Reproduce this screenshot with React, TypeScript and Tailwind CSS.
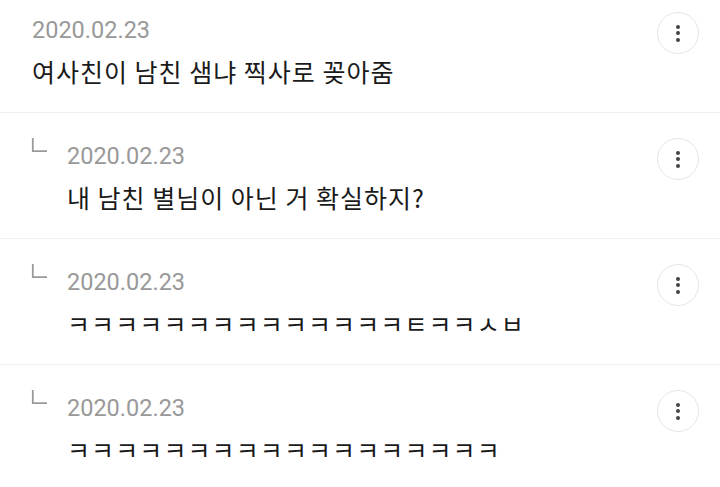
import React from "react";

const Kebab = () => (
  <div className="w-[42px] h-[42px] rounded-full border border-[#e6e6e6] flex flex-col items-center justify-center gap-[2.5px]">
    <span className="block w-[4px] h-[4px] rounded-full bg-[#444444]" />
    <span className="block w-[4px] h-[4px] rounded-full bg-[#444444]" />
    <span className="block w-[4px] h-[4px] rounded-full bg-[#444444]" />
  </div>
);

const ReplyIcon = () => (
  <svg width="18" height="16" viewBox="0 0 18 16" className="block">
    <path d="M1.8 0 V13.2 H16" fill="none" stroke="#9a9a9a" strokeWidth="1.8" />
  </svg>
);

type Item = { text: string; reply: boolean; tight?: boolean };

const items: Item[] = [
  { text: "여사친이 남친 샘냐 찍사로 꽂아줌", reply: false },
  { text: "내 남친 별님이 아닌 거 확실하지?", reply: true },
  { text: "ㅋㅋㅋㅋㅋㅋㅋㅋㅋㅋㅋㅋㅋㅋㅌㅋㅋㅅㅂ", reply: true, tight: true },
  { text: "ㅋㅋㅋㅋㅋㅋㅋㅋㅋㅋㅋㅋㅋㅋㅋㅋㅋㅋ", reply: true, tight: true },
];

export default function App() {
  return (
    <div className="w-[720px] h-[487px] overflow-hidden bg-white">
      <div className="-mt-[13px]">
        {items.map((it, i) => (
          <div key={i} className="flex h-[126px] border-b border-[#efefef]">
            <div className={`flex-1 flex pt-[27px] ${it.reply ? "pl-[31px]" : "pl-[32px]"}`}>
              {it.reply && (
                <div className="w-[36px] -mt-[2px]">
                  <ReplyIcon />
                </div>
              )}
              <div className="flex flex-col">
                <div
                  className="text-[23.5px] leading-[32px] text-[#999999]"
                  style={{ fontFamily: "Roboto, 'Noto Sans', sans-serif" }}
                >
                  2020.02.23
                </div>
                <div
                  className={`mt-[8px] text-[25px] leading-[34px] font-normal text-[#1a1a1a] ${it.tight ? "tracking-[1.1px]" : "tracking-[1px]"}`}
                  style={{ fontFamily: "'Noto Sans CJK KR', 'Noto Sans', sans-serif" }}
                >
                  {it.text}
                </div>
              </div>
            </div>
            <div className="pt-[25px] pr-[21px]">
              <Kebab />
            </div>
          </div>
        ))}
      </div>
    </div>
  );
}
